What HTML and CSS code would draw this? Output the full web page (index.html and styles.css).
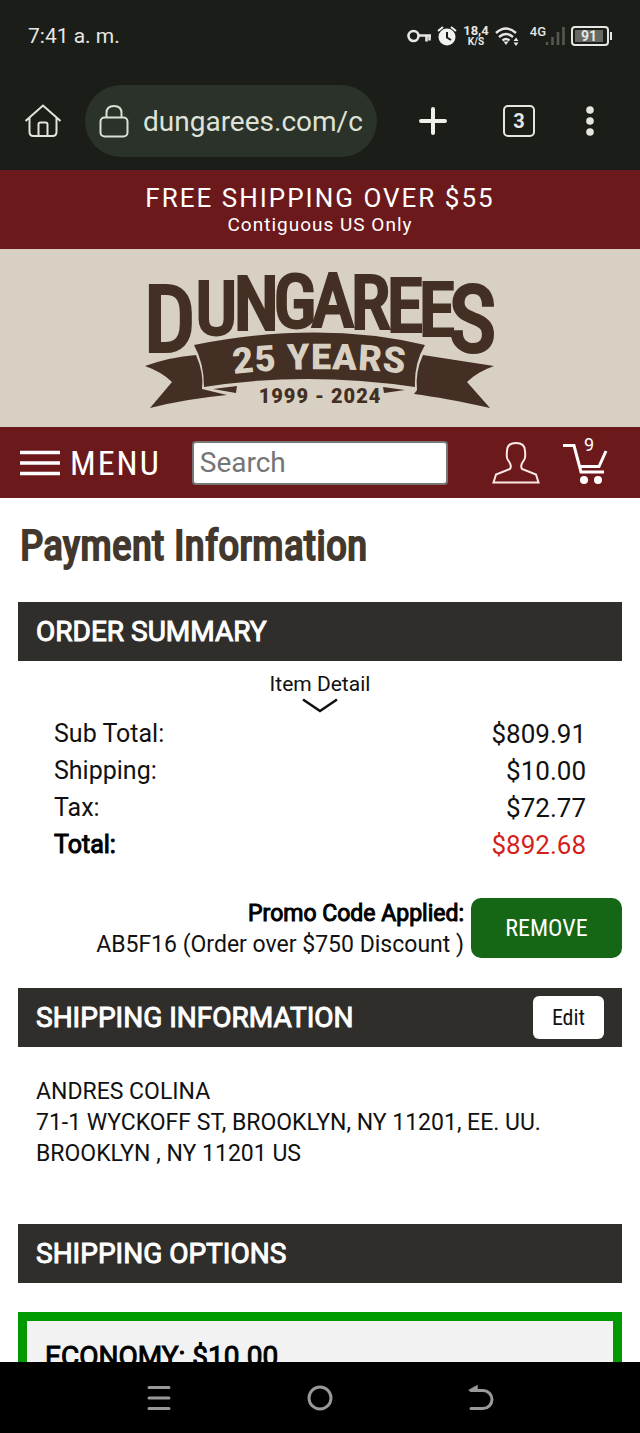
FILE: index.html
```html
<!DOCTYPE html>
<html lang="en">
<head>
<meta charset="utf-8">
<meta name="viewport" content="width=device-width, initial-scale=1">
<title>Payment Information - Dungarees</title>
<link rel="stylesheet" href="styles.css">
</head>
<body>
<header class="chrome">
  <div class="status">
    <span class="clock">7:41 a. m.</span>
    <div class="indicators">
      <svg width="24" height="16" viewBox="0 0 24 16" fill="none" stroke="#e6e6e2" stroke-width="2.6"><circle cx="6.5" cy="8" r="5"/><path d="M11.500 7.500H24M19.500 7.500v6M22.500 7.500v5"/></svg>
      <svg width="20" height="22" viewBox="0 0 20 22"><circle cx="10" cy="12" r="8.500" fill="#f2f2ef"/><path d="M1 6l5-4M19 6l-5-4" stroke="#f2f2ef" stroke-width="2"/><path d="M10 7v5.500l4 2.500" fill="none" stroke="#1b1d19" stroke-width="2"/></svg>
      <span class="speed"><b>18,4</b><small>K/S</small></span>
      <svg width="24" height="20" viewBox="0 0 24 20" fill="none" stroke="#e6e6e2" stroke-width="2.400"><path d="M1 7Q11-2 21 7M4 11q7-6 14 0M7.500 14.500q3.500-3 7 0"/><path d="M8.500 15.500h5L11 19z" fill="#e6e6e2" stroke="none"/><path d="M18.500 15l2.500-3.500 2.500 3.500zM18.500 16.500h5L21 20z" fill="#e6e6e2" stroke="none"/></svg>
      <span class="network">4G</span>
      <svg class="bars" width="20" height="20" viewBox="0 0 20 20"><path d="M2 16v3M7.500 11v8M13 6v13M18.500 1v18" stroke="#555751" stroke-width="2.600"/></svg>
      <span class="battery"><span class="charge">91</span></span>
    </div>
  </div>
  <div class="toolbar">
    <button class="tool" aria-label="Home"><svg width="38" height="34" viewBox="0 0 38 34" fill="none" stroke="#e3e4dc" stroke-width="2"><path d="M1.500 17L19 1.500 36.500 17M5.500 14v14q0 4 4 4h19q4 0 4-4V14M14.500 32V20.500q0-2 2-2h5q2 0 2 2V32"/></svg></button>
    <div class="address">
      <svg width="30" height="34" viewBox="0 0 30 34" fill="none" stroke="#dcdfd3" stroke-width="2"><rect x="1.500" y="13.500" width="27" height="19" rx="4"/><path d="M7.500 13.500V9q0-7 7.500-7t7.500 7v4.500"/></svg>
      <span class="url">dungarees.com/c</span>
    </div>
    <button class="tool" aria-label="New tab"><svg width="30" height="30" viewBox="0 0 30 30" stroke="#f0f0e8" stroke-width="4" stroke-linecap="round"><path d="M15 3v24M3 15h24"/></svg></button>
    <button class="tabs" aria-label="Open tabs">3</button>
    <button class="tool more" aria-label="More"><svg width="10" height="30" viewBox="0 0 10 30" fill="#e6e6de"><circle cx="5" cy="4" r="3.800"/><circle cx="5" cy="15" r="3.800"/><circle cx="5" cy="26" r="3.800"/></svg></button>
  </div>
</header>
<div class="page">
  <div class="banner"><p class="banner-title">FREE SHIPPING OVER $55</p><p class="banner-note">Contiguous US Only</p></div>
  <a class="brand" href="#">
    <svg width="350" height="146" viewBox="0 0 350 146" role="img" aria-label="Dungarees 25 Years">
      <g class="wordmark">
        <text class="cap" x="-1" y="82">D</text>
        <text class="mid" x="51 89 129 167 206 242 274" y="65 60 58 57 59 62 66">UNGAREE</text>
        <text class="cap" x="304" y="82">S</text>
      </g>
      <g fill="#432f24">
        <path d="M49 76Q175 51 280 76Q269 94 270 118Q160 102 59 118Q59 94 49 76Z"/>
        <path d="M0 97Q25 88 51 86Q59 104 57 120L82 126Q40 130 5 139L27 113Q17 103 0 97Z"/>
        <path d="M278 86Q310 91 349 97Q332 103 322 113L345 139Q300 129 269 125L272 121Q270 103 278 86Z"/>
        <path d="M68 120L92 117 91 124ZM238 118L260 121 239 124Z"/>
      </g>
      <path id="arc" d="M89 105Q176 95 276 106" fill="none"/>
      <text class="ribbon"><textPath href="#arc">25 YEARS</textPath></text>
      <text class="years" x="175" y="134" text-anchor="middle">1999 - 2024</text>
    </svg>
  </a>
  <nav class="menubar">
    <button class="menu"><svg width="40" height="26" viewBox="0 0 40 26" stroke="#fff" stroke-width="3.600"><path d="M0 2.500h40M0 13h40M0 23.500h40"/></svg>MENU</button>
    <input class="search" type="search" placeholder="Search" aria-label="Search">
    <a class="account" href="#" aria-label="Account"><svg width="48" height="44" viewBox="0 0 48 44" fill="none" stroke="#fbe9e4" stroke-width="2"><path d="M1.500 41.500L4 33.500 18 28Q20 25 17 20.500Q14 18 15 10Q15 2 24 2T33 10Q34 18 31 20.500Q28 25 30 28L44 33.500 46.500 41.500Z"/></svg></a>
    <a class="cart" href="#" aria-label="Cart, 9 items"><svg width="46" height="44" viewBox="0 0 46 44" fill="none" stroke="#fff" stroke-width="3"><path d="M1 4.500h11L19 31h23M17 25.500h20L44 10"/><circle cx="22" cy="39" r="4" fill="#fff" stroke="none"/><circle cx="36" cy="39" r="4" fill="#fff" stroke="none"/></svg><span class="count">9</span></a>
  </nav>
  <main class="content">
    <h1 class="title">Payment Information</h1>
    <section>
      <h2 class="bar">ORDER SUMMARY</h2>
      <button class="detail">Item Detail<svg width="36" height="15" viewBox="0 0 36 15" fill="none" stroke="#111" stroke-width="2.600"><path d="M1 1.500L18 13 35 1.500"/></svg></button>
      <table class="totals">
        <tr><th>Sub Total:</th><td>$809.91</td></tr>
        <tr><th>Shipping:</th><td>$10.00</td></tr>
        <tr><th>Tax:</th><td>$72.77</td></tr>
        <tr class="grand"><th>Total:</th><td>$892.68</td></tr>
      </table>
      <div class="promo">
        <p class="promo-text"><span class="strong">Promo Code Applied:</span><br>AB5F16 (Order over $750 Discount )</p>
        <button class="remove">REMOVE</button>
      </div>
    </section>
    <section>
      <div class="bar"><h2 class="bar-title">SHIPPING INFORMATION</h2><button class="edit">Edit</button></div>
      <address class="shipto">ANDRES COLINA<br>71-1 WYCKOFF ST, BROOKLYN, NY 11201, EE. UU.<br>BROOKLYN , NY 11201 US</address>
    </section>
    <section>
      <h2 class="bar">SHIPPING OPTIONS</h2>
      <div class="option">ECONOMY: $10.00</div>
    </section>
  </main>
</div>
<footer class="navbar">
  <button class="tool" aria-label="Recent apps"><svg width="26" height="26" viewBox="0 0 26 26" stroke="#999" stroke-width="3" stroke-linecap="round"><path d="M3 2.500h20M3 13h20M3 23.500h20"/></svg></button>
  <button class="tool" aria-label="Home screen"><svg width="26" height="26" viewBox="0 0 26 26" fill="none" stroke="#999" stroke-width="3"><circle cx="13" cy="13" r="11"/></svg></button>
  <button class="tool" aria-label="Back"><svg width="26" height="26" viewBox="0 0 26 26" fill="none" stroke="#999" stroke-width="3" stroke-linecap="round"><path d="M3 5.500h12a9 9 0 0 1 0 18H3"/><path d="M2 5L9 1v5z" fill="#999" stroke-width="1.500"/></svg></button>
</footer>
</body>
</html>
```

FILE: styles.css
```css
* { box-sizing: border-box; }
body { margin: 0; height: 100vh; display: flex; flex-direction: column; overflow: hidden; font-family: Roboto, "Liberation Sans", sans-serif; color: #111; background: #fff; }
button { border: 0; padding: 0; background: none; font: inherit; color: inherit; }
h1, h2, p { margin: 0; }
svg { display: block; flex: none; }

.chrome { flex: none; background: #1b1d19; color: #e6e6e2; }
.status { display: flex; justify-content: space-between; align-items: center; height: 72px; padding: 0 31px 0 28px; }
.clock { font-size: 21px; }
.indicators { display: flex; align-items: center; gap: 6px; }
.speed { display: flex; flex-direction: column; align-items: center; font-size: 13px; line-height: 11px; }
.speed small { font-size: 10px; font-weight: 700; }
.network { font-size: 13px; font-weight: 500; padding-bottom: 9px; margin-left: 5px; }
.bars { margin-left: -7px; }
.battery { position: relative; width: 38px; height: 20px; padding: 2px; border: 2px solid #e6e6e2; border-radius: 4px; }
.battery::after { content: ""; position: absolute; right: -5px; top: 4px; width: 2px; height: 8px; background: #e6e6e2; }
.charge { display: block; width: 28px; background: #666864; font-size: 14px; font-weight: 700; line-height: 12px; text-align: center; }
.toolbar { display: flex; align-items: center; height: 98px; padding: 0 45px 0 24px; }
.address { display: flex; align-items: center; gap: 14px; flex: 1; height: 72px; margin: 0 41px 0 23px; padding: 0 14px; border-radius: 36px; background: #2b322a; overflow: hidden; }
.url { overflow: hidden; white-space: nowrap; font-size: 28px; color: #dfe2d8; }
.tabs { width: 32px; height: 32px; margin: 0 50px 0 55px; border: 2px solid #e6e6de; border-radius: 5px; font-size: 20px; font-weight: 700; line-height: 28px; }

.page { flex: 1; min-height: 0; overflow: hidden; }
.banner { height: 79px; padding-top: 12px; background: #6c191c; color: #fff; text-align: center; }
.banner-title { font-size: 26px; line-height: 32px; letter-spacing: 2px; }
.banner-note { font-size: 19px; line-height: 22px; letter-spacing: 1px; }
.brand { display: flex; justify-content: center; height: 178px; padding-top: 20px; background: #d8d1c3; }
.brand svg { overflow: visible; }
.wordmark { font-family: "Roboto Condensed", "Liberation Sans Narrow", Roboto, sans-serif; font-weight: 400; fill: #432f24; stroke: #432f24; stroke-width: 4px; }
.cap { font-size: 90px; }
.mid { font-size: 72px; }
.ribbon { font-size: 36px; font-weight: 900; fill: #d8d1c3; letter-spacing: 1px; }
.years { font-size: 20px; font-weight: 900; fill: #432f24; letter-spacing: 1px; }
.menubar { display: flex; align-items: center; height: 71px; padding: 0 32px 0 20px; background: #6c191c; color: #fff; }
.menu { display: flex; align-items: center; gap: 10px; font-family: "Roboto Condensed", Roboto, sans-serif; font-size: 34px; letter-spacing: 2px; }
.search { flex: 1; min-width: 0; height: 44px; margin: 0 44px 0 31px; padding: 0 6px; border: 2px solid #777; border-radius: 4px; background: #fff; font-family: inherit; font-size: 28px; }
.search::placeholder { color: #757575; }
.cart { position: relative; margin-left: 22px; color: #fff; text-decoration: none; }
.count { position: absolute; left: 22px; top: -7px; font-size: 18px; line-height: 22px; }

.content { padding: 0 18px; }
.title { padding: 20px 2px 28px; font-family: "Roboto Condensed", Roboto, sans-serif; font-size: 42px; line-height: 56px; font-weight: 400; -webkit-text-stroke: 2px #43382d; color: #43382d; }
.bar { display: flex; align-items: center; justify-content: space-between; height: 59px; padding: 0 18px; background: #302e2b; color: #fff; }
.bar, .bar-title { font-size: 28px; font-weight: 400; -webkit-text-stroke: 1px #fff; }
.detail { display: flex; flex-direction: column; align-items: center; gap: 1px; margin: 0 auto; padding-top: 10px; font-size: 21px; line-height: 26px; }
.totals { width: 100%; margin-top: 2px; padding: 0 36px; border-spacing: 0; font-size: 26px; line-height: 36px; }
.totals th { padding: 0; font-size: 25px; font-weight: 400; line-height: 37px; text-align: left; }
.totals td { padding: 0; text-align: right; }
.grand th, .strong { color: #000; -webkit-text-stroke: 1px #000; }
.grand td { color: #d51f1c; }
.promo { display: flex; justify-content: flex-end; gap: 7px; margin: 35px 0 28px; }
.promo-text { font-size: 23px; line-height: 31px; text-align: right; }
.remove { width: 151px; height: 60px; border-radius: 10px; background: #156615; color: #fff; font-family: "Roboto Condensed", Roboto, sans-serif; font-size: 24px; }
.edit { width: 71px; height: 43px; border-radius: 6px; background: #fff; color: #111; font-family: "Roboto Condensed", Roboto, sans-serif; font-size: 22px; -webkit-text-stroke: 0; }
.shipto { padding: 29px 18px 55px; font-size: 23px; line-height: 31px; font-style: normal; }
.option { height: 180px; margin-top: 29px; padding: 18px; border: 9px solid #009a00; background: #f2f2f2; color: #000; font-size: 28px; line-height: 36px; -webkit-text-stroke: 1px #000; }

.navbar { flex: none; display: flex; justify-content: center; align-items: center; gap: 135px; height: 71px; background: #000; }
```
